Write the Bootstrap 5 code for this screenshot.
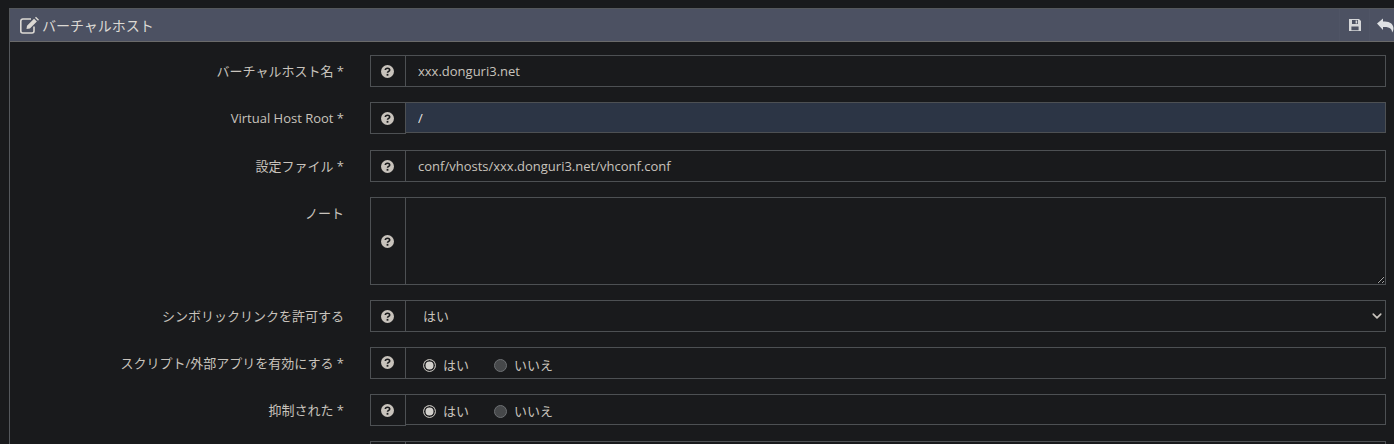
<!DOCTYPE html>
<html lang="ja">
<head>
<meta charset="utf-8">
<title>バーチャルホスト</title>
<link href="https://cdn.jsdelivr.net/npm/bootstrap@5.3.0/dist/css/bootstrap.min.css" rel="stylesheet">
<style>
html,body{height:444px;overflow:hidden;}
body{background:#191a1c;color:#c8c3bc;font-family:"Open Sans","Noto Sans CJK JP",sans-serif;font-size:13px;padding:8px 0 0 9px;}
.vh-panel{background:#191a1c;border:1px solid #55585c;border-right:0;border-bottom:0;border-radius:0;width:1385px;color:#c8c3bc;overflow:hidden;}
.vh-head{height:33px;background:#4c5162;border-bottom:1px solid #6a6a6a;color:#dcd9d4;font-size:14px;padding:0 0 0 10px;border-radius:0!important;}
.vh-head svg.ti{width:20px;height:18px;margin-right:2px;}
.vh-acts{margin-right:-5px;}
.vh-act{width:30px;height:32px;border-left:1px solid #4f5465;}
.vh-body{padding:13px 0 0 0;}
.vh-row{margin-bottom:15px;}
.vh-row.wide{margin-bottom:16px;}
.vh-lab{padding:0 12px 0 0;line-height:20px;padding-top:6px;font-size:13px;color:#c8c3bc;}
.vh-ctl{padding:0 8px 0 14px;}
.vh-group{height:32px;align-items:flex-start;}
.vh-group.tall{height:88px;}
.vh-group .input-group-text{width:36px;height:100%;padding:0 2px 0 0;justify-content:center;background:#191a1c;border:1px solid #4d5053;border-radius:0;}
.vh-group.radio-row .input-group-text{padding-bottom:2px;}
.vh-group .form-control,.vh-group .form-select,.vh-radios{background-color:#191a1c;border:1px solid #4d5053;border-radius:0;color:#c8c3bc;font-size:13px;height:100%;padding:0 12px;margin-left:-1px;box-shadow:none;}
.vh-group .form-control.on{background:#2c3545;color:#e8e6e3;}
.vh-group .form-select{padding:2px 12px 0 17px;background-image:url("data:image/svg+xml,%3csvg xmlns='http://www.w3.org/2000/svg' viewBox='0 0 16 16'%3e%3cpath fill='none' stroke='%23c8c3bc' stroke-linecap='round' stroke-linejoin='round' stroke-width='2.6' d='m2 5 6 6 6-6'/%3e%3c/svg%3e");background-size:10px 10px;background-position:right 3px center;}
.vh-group textarea.form-control{padding-top:6px;resize:vertical;}
.vh-radios{flex:1 1 auto;width:1%;display:flex;align-items:center;padding:4px 0 0 17px;gap:25px;}
.vh-opt{display:flex;align-items:center;gap:7px;line-height:1;}
.vh-dot{width:13px;height:13px;border-radius:50%;background:#46484a;border:1px solid #6d7073;flex:none;}
.vh-dot.sel{background:#d2d0cc;box-shadow:inset 0 0 0 1.5px #191a1c;border-color:#b8b5b0;}
.vh-group.short-right .vh-radios,.vh-group.short-right .form-control{height:31px;}
</style>
</head>
<body>
<div class="card vh-panel">
  <div class="card-header vh-head d-flex align-items-center">
    <svg class="ti" viewBox="0 0 20 18" aria-hidden="true"><path d="M14 10.500V15a2 2 0 0 1-2 2H2.800a2 2 0 0 1-2-2V5a2 2 0 0 1 2-2H11" fill="none" stroke="#dcd9d4" stroke-width="1.600"/><path d="M6.500 13 7 9.700l7-7 2.900 2.900-7 7z M15 1.800l1-1 3 3-1 1z" fill="#dcd9d4"/></svg>
    <span>バーチャルホスト</span>
    <div class="ms-auto d-flex vh-acts">
      <div class="vh-act d-flex align-items-center justify-content-center">
        <svg width="14" height="14" viewBox="0 0 14 14" aria-hidden="true"><path fill="#d5d6d8" fill-rule="evenodd" d="M1 1h10l2 2v10H1zM4 2v4h6V2zM7.600 2.600h1.600v2.800H7.600zM3.400 8.400v3.800h7.200V8.400z"/></svg>
      </div>
      <div class="vh-act d-flex align-items-center justify-content-center" style="padding-left:2px">
        <svg width="17" height="15" viewBox="0 0 17 15" aria-hidden="true"><path fill="#dfe1e4" d="M0 5.500 6 .5v3c5 0 10 1 10.500 6.500 0 2-.7 3.500-1.500 4.500.3-3-1.500-5.800-9-5.500v3z"/></svg>
      </div>
    </div>
  </div>
  <div class="card-body vh-body">

    <div class="row g-0 vh-row">
      <label class="col-3 text-end vh-lab">バーチャルホスト名 *</label>
      <div class="col-9 vh-ctl">
        <div class="input-group vh-group">
          <span class="input-group-text"><svg width="13" height="13" viewBox="0 0 13 13" aria-hidden="true"><circle cx="6.500" cy="6.500" r="6.500" fill="#c8c3bc"/><path d="M4.300 5c.1-1.200 1-1.800 2.200-1.800s2.200.7 2.200 1.700c0 1.500-2.200 1.500-2.200 2.900" fill="none" stroke="#191a1c" stroke-width="1.600"/><rect x="5.600" y="8.900" width="1.800" height="1.800" fill="#191a1c"/></svg></span>
          <input class="form-control" type="text" value="xxx.donguri3.net">
        </div>
      </div>
    </div>

    <div class="row g-0 vh-row wide">
      <label class="col-3 text-end vh-lab">Virtual Host Root *</label>
      <div class="col-9 vh-ctl">
        <div class="input-group vh-group short-right">
          <span class="input-group-text"><svg width="13" height="13" viewBox="0 0 13 13" aria-hidden="true"><circle cx="6.500" cy="6.500" r="6.500" fill="#c8c3bc"/><path d="M4.300 5c.1-1.200 1-1.800 2.200-1.800s2.200.7 2.200 1.700c0 1.500-2.200 1.500-2.200 2.900" fill="none" stroke="#191a1c" stroke-width="1.600"/><rect x="5.600" y="8.900" width="1.800" height="1.800" fill="#191a1c"/></svg></span>
          <input class="form-control on" type="text" value="/">
        </div>
      </div>
    </div>

    <div class="row g-0 vh-row">
      <label class="col-3 text-end vh-lab">設定ファイル *</label>
      <div class="col-9 vh-ctl">
        <div class="input-group vh-group">
          <span class="input-group-text"><svg width="13" height="13" viewBox="0 0 13 13" aria-hidden="true"><circle cx="6.500" cy="6.500" r="6.500" fill="#c8c3bc"/><path d="M4.300 5c.1-1.200 1-1.800 2.200-1.800s2.200.7 2.200 1.700c0 1.500-2.200 1.500-2.200 2.900" fill="none" stroke="#191a1c" stroke-width="1.600"/><rect x="5.600" y="8.900" width="1.800" height="1.800" fill="#191a1c"/></svg></span>
          <input class="form-control" type="text" value="conf/vhosts/xxx.donguri3.net/vhconf.conf">
        </div>
      </div>
    </div>

    <div class="row g-0 vh-row">
      <label class="col-3 text-end vh-lab">ノート</label>
      <div class="col-9 vh-ctl">
        <div class="input-group vh-group tall">
          <span class="input-group-text"><svg width="13" height="13" viewBox="0 0 13 13" aria-hidden="true"><circle cx="6.500" cy="6.500" r="6.500" fill="#c8c3bc"/><path d="M4.300 5c.1-1.200 1-1.800 2.200-1.800s2.200.7 2.200 1.700c0 1.500-2.200 1.500-2.200 2.900" fill="none" stroke="#191a1c" stroke-width="1.600"/><rect x="5.600" y="8.900" width="1.800" height="1.800" fill="#191a1c"/></svg></span>
          <textarea class="form-control"></textarea>
        </div>
      </div>
    </div>

    <div class="row g-0 vh-row">
      <label class="col-3 text-end vh-lab">シンボリックリンクを許可する</label>
      <div class="col-9 vh-ctl">
        <div class="input-group vh-group">
          <span class="input-group-text"><svg width="13" height="13" viewBox="0 0 13 13" aria-hidden="true"><circle cx="6.500" cy="6.500" r="6.500" fill="#c8c3bc"/><path d="M4.300 5c.1-1.200 1-1.800 2.200-1.800s2.200.7 2.200 1.700c0 1.500-2.200 1.500-2.200 2.900" fill="none" stroke="#191a1c" stroke-width="1.600"/><rect x="5.600" y="8.900" width="1.800" height="1.800" fill="#191a1c"/></svg></span>
          <select class="form-select"><option>はい</option><option>いいえ</option></select>
        </div>
      </div>
    </div>

    <div class="row g-0 vh-row">
      <label class="col-3 text-end vh-lab">スクリプト/外部アプリを有効にする *</label>
      <div class="col-9 vh-ctl">
        <div class="input-group vh-group radio-row">
          <span class="input-group-text"><svg width="13" height="13" viewBox="0 0 13 13" aria-hidden="true"><circle cx="6.500" cy="6.500" r="6.500" fill="#c8c3bc"/><path d="M4.300 5c.1-1.200 1-1.800 2.200-1.800s2.200.7 2.200 1.700c0 1.500-2.200 1.500-2.200 2.900" fill="none" stroke="#191a1c" stroke-width="1.600"/><rect x="5.600" y="8.900" width="1.800" height="1.800" fill="#191a1c"/></svg></span>
          <div class="vh-radios">
            <div class="vh-opt"><span class="vh-dot sel"></span><span>はい</span></div>
            <div class="vh-opt"><span class="vh-dot"></span><span>いいえ</span></div>
          </div>
        </div>
      </div>
    </div>

    <div class="row g-0 vh-row">
      <label class="col-3 text-end vh-lab">抑制された *</label>
      <div class="col-9 vh-ctl">
        <div class="input-group vh-group short-right">
          <span class="input-group-text"><svg width="13" height="13" viewBox="0 0 13 13" aria-hidden="true"><circle cx="6.500" cy="6.500" r="6.500" fill="#c8c3bc"/><path d="M4.300 5c.1-1.200 1-1.800 2.200-1.800s2.200.7 2.200 1.700c0 1.500-2.200 1.500-2.200 2.900" fill="none" stroke="#191a1c" stroke-width="1.600"/><rect x="5.600" y="8.900" width="1.800" height="1.800" fill="#191a1c"/></svg></span>
          <div class="vh-radios">
            <div class="vh-opt"><span class="vh-dot sel"></span><span>はい</span></div>
            <div class="vh-opt"><span class="vh-dot"></span><span>いいえ</span></div>
          </div>
        </div>
      </div>
    </div>

    <div class="row g-0 vh-row">
      <div class="col-3"></div>
      <div class="col-9 vh-ctl">
        <div class="input-group vh-group">
          <span class="input-group-text"></span>
          <input class="form-control" type="text" aria-label="next">
        </div>
      </div>
    </div>

  </div>
</div>
</body>
</html>
